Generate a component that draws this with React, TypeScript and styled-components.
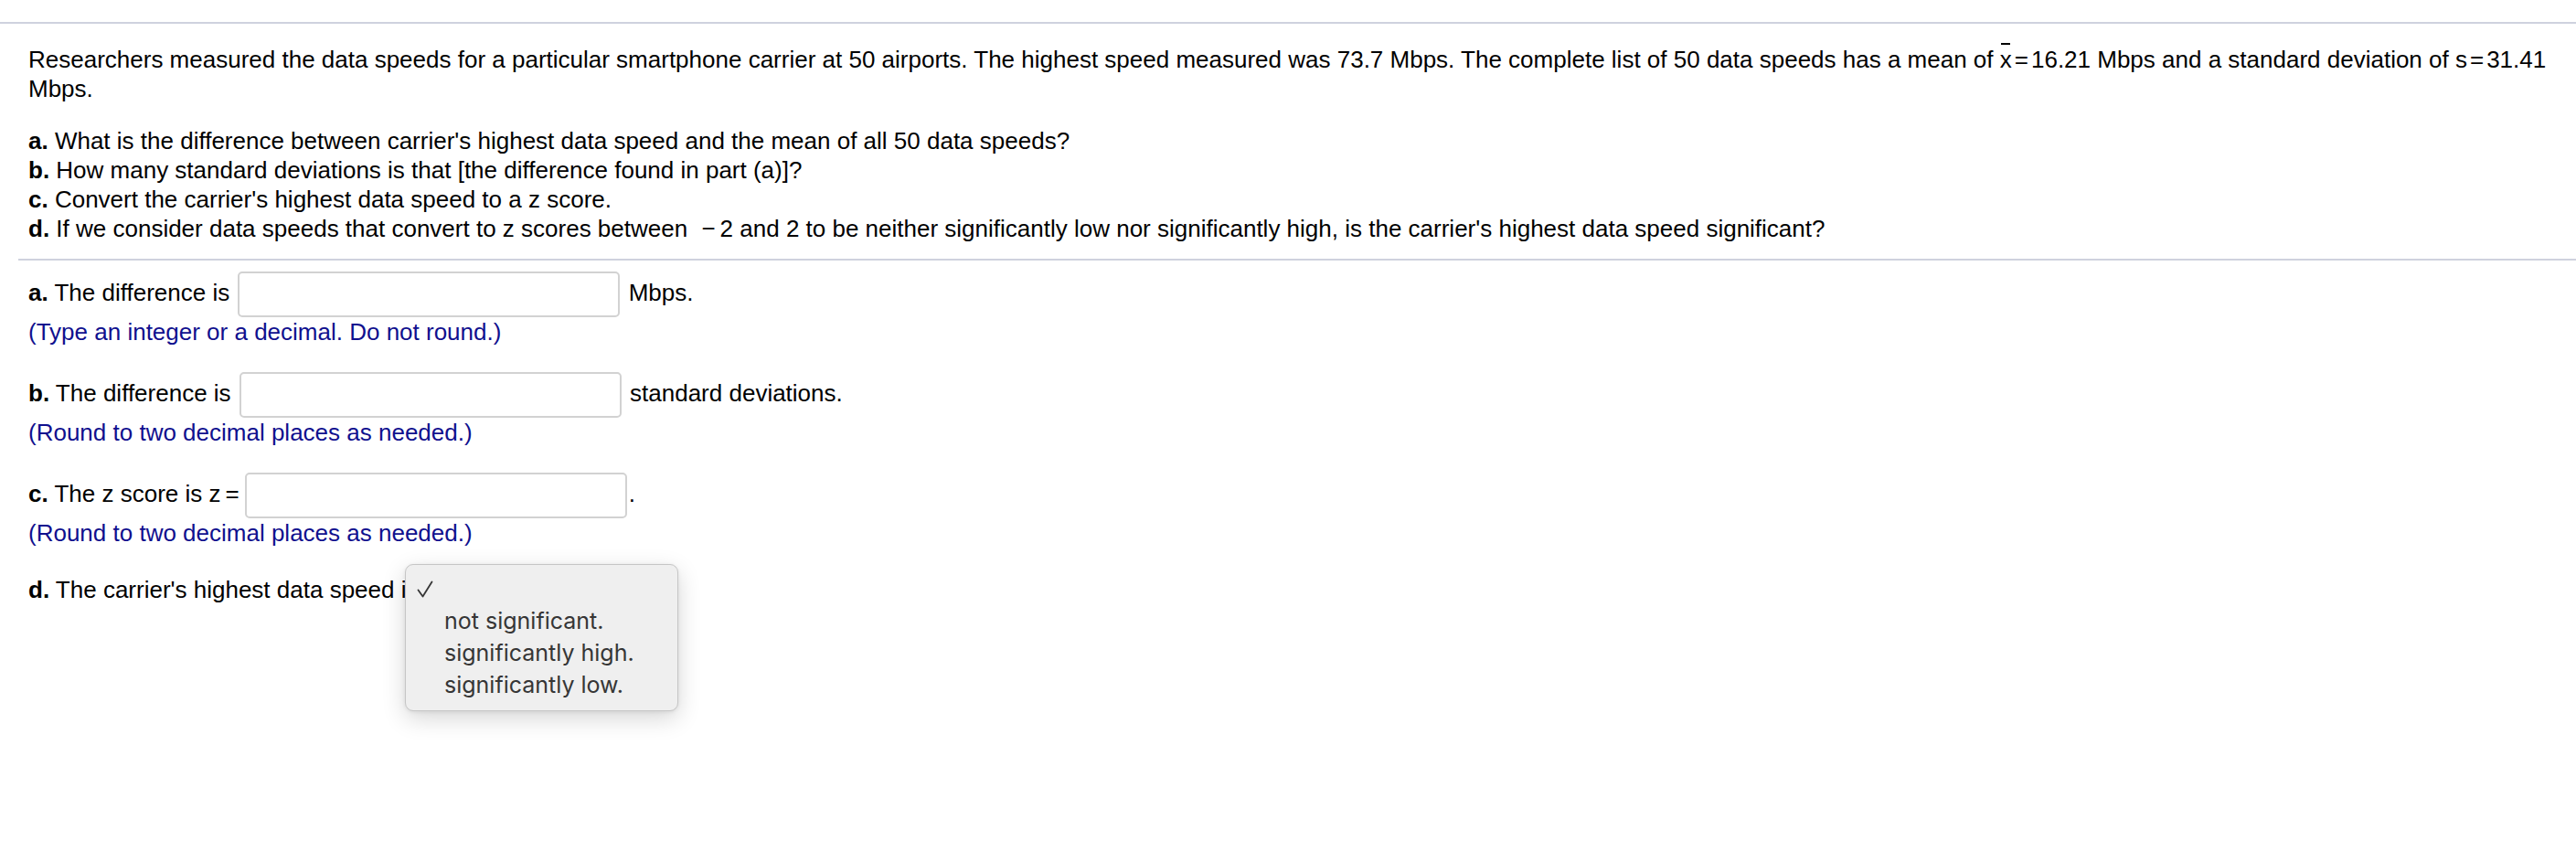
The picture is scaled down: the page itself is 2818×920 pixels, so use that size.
import React from "react";
import styled, { createGlobalStyle } from "styled-components";

const GlobalStyle = createGlobalStyle`
  html, body {
    margin: 0;
    padding: 0;
    background: #ffffff;
  }
  body {
    font-family: "Liberation Sans", Arial, Helvetica, sans-serif;
    color: #000000;
  }
`;

const Page = styled.div`
  width: 2818px;
  min-height: 920px;
  box-sizing: border-box;
  padding-top: 24px;
  font-size: 26px;
  line-height: 32px;
`;

const Rule = styled.div<{ $inset?: number }>`
  height: 2px;
  margin-left: ${(p) => p.$inset ?? 0}px;
  background: #cfd2de;
`;

const Problem = styled.section`
  padding: 23px 4px 17px 31px;
`;

const Paragraph = styled.p`
  margin: 0 0 25px;
`;

const PartList = styled.div`
  display: flex;
  flex-direction: column;
`;

const Line = styled.div`
  white-space: nowrap;
`;

const Label = styled.b`
  font-weight: bold;
`;

const MathVar = styled.span`
  display: inline-block;
  border-top: 2px solid transparent;
  margin-top: -2px;
  background-image: linear-gradient(#000000, #000000);
  background-repeat: no-repeat;
  background-size: 10px 2px;
  background-position: 1px 0;
  background-origin: border-box;
`;

const MathOp = styled.span<{ $l?: number; $r?: number }>`
  padding-left: ${(p) => p.$l ?? 3}px;
  padding-right: ${(p) => p.$r ?? 3}px;
`;

const Answers = styled.section`
  padding: 12px 4px 0 31px;
  display: flex;
  flex-direction: column;
  gap: 28px;
`;

const AnswerGroup = styled.div<{ $pad?: number }>`
  padding-top: ${(p) => p.$pad ?? 0}px;
`;

const AnswerLine = styled.div`
  position: relative;
  white-space: nowrap;
`;

const Field = styled.input`
  display: inline-block;
  vertical-align: middle;
  width: 418px;
  height: 50px;
  box-sizing: border-box;
  margin: 0 2px;
  padding: 0 8px;
  border: 2px solid #d2d2d2;
  border-radius: 5px;
  background: #ffffff;
  font: inherit;
  outline: none;
`;

const Hint = styled.div`
  color: #10108e;
`;

const Menu = styled.ul`
  position: absolute;
  left: 412px;
  top: -12px;
  width: 299px;
  height: 161px;
  box-sizing: border-box;
  margin: 0;
  padding: 9px 0 0;
  list-style: none;
  background: #efefef;
  border: 1px solid #c6c6c6;
  border-radius: 9px;
  box-shadow: 0 8px 26px rgba(0, 0, 0, 0.16), 0 1px 4px rgba(0, 0, 0, 0.08);
  font-family: Inter, "Noto Sans", sans-serif;
  font-size: 25px;
  line-height: 35px;
  color: #363636;
`;

const MenuItem = styled.li`
  position: relative;
  height: 35px;
  padding-left: 42px;
`;

const Check = styled.svg`
  position: absolute;
  left: 12px;
  top: 8px;
`;

const CheckMark = () => (
  <Check width="18" height="19" viewBox="0 0 18 19">
    <path
      d="M1.5 10.5 L6.5 17.5 L16.5 1.5"
      fill="none"
      stroke="#363636"
      strokeWidth="1.8"
      strokeLinecap="round"
      strokeLinejoin="round"
    />
  </Check>
);

export default function App() {
  const options = ["", "not significant.", "significantly high.", "significantly low."];
  return (
    <>
      <GlobalStyle />
      <Page>
        <Rule />
        <Problem>
          <Paragraph>
            Researchers measured the data speeds for a particular smartphone carrier at 50 airports. The highest
            speed measured was 73.7 Mbps. The complete list of 50 data speeds has a mean of <MathVar>x</MathVar>
            <MathOp>=</MathOp>16.21 Mbps and a standard deviation of s<MathOp>=</MathOp>31.41 Mbps.
          </Paragraph>
          <PartList>
            <Line>
              <Label>a.</Label> What is the difference between carrier's highest data speed and the mean of all 50
              data speeds?
            </Line>
            <Line>
              <Label>b.</Label> How many standard deviations is that [the difference found in part (a)]?
            </Line>
            <Line>
              <Label>c.</Label> Convert the carrier's highest data speed to a z score.
            </Line>
            <Line>
              <Label>d.</Label> If we consider data speeds that convert to z scores between{" "}
              <MathOp $l={8} $r={5}>−</MathOp>2 and 2 to be neither significantly low nor significantly high, is the
              carrier's highest data speed significant?
            </Line>
          </PartList>
        </Problem>
        <Rule $inset={20} />
        <Answers>
          <AnswerGroup>
            <AnswerLine>
              <Label>a.</Label> The difference is <Field type="text" aria-label="difference" /> Mbps.
            </AnswerLine>
            <Hint>(Type an integer or a decimal. Do not round.)</Hint>
          </AnswerGroup>
          <AnswerGroup>
            <AnswerLine>
              <Label>b.</Label> The difference is <Field type="text" aria-label="standard deviations" /> standard
              deviations.
            </AnswerLine>
            <Hint>(Round to two decimal places as needed.)</Hint>
          </AnswerGroup>
          <AnswerGroup>
            <AnswerLine>
              <Label>c.</Label> The z score is z<MathOp $l={5} $r={4}>=</MathOp>
              <Field type="text" aria-label="z score" />.
            </AnswerLine>
            <Hint>(Round to two decimal places as needed.)</Hint>
          </AnswerGroup>
          <AnswerGroup $pad={2}>
            <AnswerLine>
              <Label>d.</Label> The carrier's highest data speed is
              <Menu role="listbox">
                {options.map((o, i) => (
                  <MenuItem key={i} role="option" aria-selected={i === 0}>
                    {i === 0 && <CheckMark />}
                    {o}
                  </MenuItem>
                ))}
              </Menu>
            </AnswerLine>
          </AnswerGroup>
        </Answers>
      </Page>
    </>
  );
}
